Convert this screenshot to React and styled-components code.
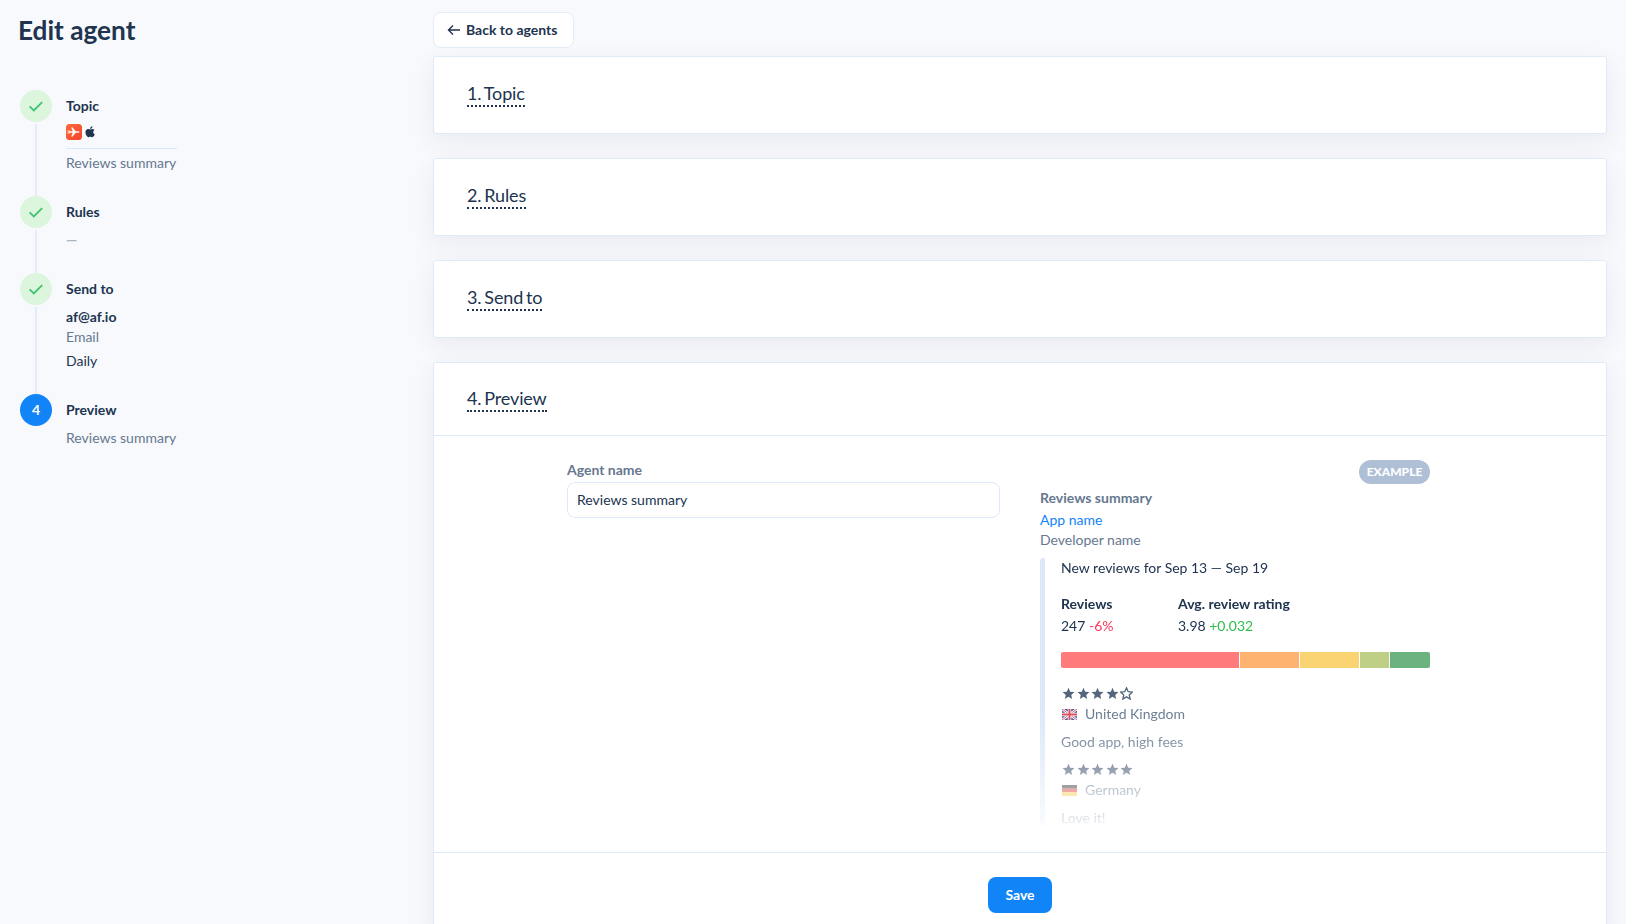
import React from "react";
import styled, { createGlobalStyle } from "styled-components";

const Global = createGlobalStyle`
  html, body { margin: 0; padding: 0; height: 924px; overflow: hidden; background: #f8f9fd; }
  body { font-family: Lato, "Liberation Sans", sans-serif; color: #20344f; -webkit-font-smoothing: antialiased; }
  * { box-sizing: border-box; }
`;

const Page = styled.div`
  display: grid;
  grid-template-columns: 433px 1174px;
  height: 924px;
  overflow: hidden;
`;
const Sidebar = styled.aside`
  padding: 12px 0 0 18px;
`;
const PageTitle = styled.h1`
  margin: 0 0 42px;
  font-size: 26.2px;
  line-height: 36px;
  font-weight: 700;
  color: #20344f;
`;
const Steps = styled.div`
  display: flex;
  flex-direction: column;
  padding-left: 2px;
`;
const Step = styled.div`
  display: grid;
  grid-template-columns: 32px 1fr;
  column-gap: 14px;
  height: ${(p) => p.$h}px;
`;
const Rail = styled.div`
  display: flex;
  flex-direction: column;
  align-items: center;
  gap: 2px;
`;
const Circle = styled.div`
  flex: none;
  width: 32px;
  height: 32px;
  border-radius: 50%;
  display: flex;
  align-items: center;
  justify-content: center;
  background: ${(p) => (p.$active ? "#1184f8" : "#dcf5dd")};
  color: #fff;
  font-size: 14px;
  font-weight: 700;
  padding-bottom: 1px;
`;
const RailLine = styled.div`
  flex: 1;
  width: 2px;
  background: #e3edf9;
`;
const StepBody = styled.div`
  display: flex;
  flex-direction: column;
  align-items: flex-start;
  padding-top: 5.5px;
`;
const StepTitle = styled.div`
  font-size: 14px;
  line-height: 20px;
  font-weight: 700;
  color: #20344f;
  margin-bottom: 8.5px;
`;
const IconRow = styled.div`
  display: flex;
  align-items: center;
  gap: 3px;
  height: 16px;
  width: 111px;
`;
const Rule = styled.div`
  width: 111px;
  height: 1px;
  background: #dbe8f7;
  margin: 8px 0 4px;
`;
const Muted = styled.div`
  font-size: 14px;
  line-height: 20px;
  color: #66788f;
`;
const Strong = styled.div`
  font-size: 14px;
  line-height: 20px;
  font-weight: 700;
  color: #20344f;
`;
const Plain = styled.div`
  font-size: 14px;
  line-height: 20px;
  margin-top: 4px;
  color: #20344f;
`;
const Dash = styled.div`
  font-size: 14px;
  line-height: 20px;
  font-weight: 900;
  color: #a9b4c2;
`;

const Main = styled.main`
  display: flex;
  flex-direction: column;
  align-items: flex-start;
  padding-top: 12px;
`;
const BackButton = styled.button`
  height: 36px;
  width: 141px;
  margin-bottom: 8px;
  padding: 0 0 2px 13px;
  display: flex;
  align-items: center;
  gap: 5px;
  border: 1px solid #e3edf9;
  border-radius: 8px;
  background: #fff;
  color: #20344f;
  font-family: inherit;
  font-size: 14px;
  font-weight: 700;
`;
const ArrowIcon = styled.svg`
  margin-top: 2px;
`;
const Card = styled.section`
  width: 100%;
  flex: none;
  background: #fff;
  border: 1px solid #dfeaf8;
  border-radius: 3px;
  box-shadow: 0 8px 24px rgba(32, 52, 79, 0.07);
  margin-bottom: 24px;
`;
const CardHead = styled.div`
  height: ${(p) => (p.$open ? 73 : 76)}px;
  padding: 0 0 ${(p) => (p.$open ? 0 : 3)}px 33px;
  display: flex;
  align-items: center;
  border-bottom: ${(p) => (p.$open ? "1px solid #dfeaf8" : "none")};
`;
const CardTitle = styled.h2`
  margin: 0;
  font-size: 18px;
  font-weight: 400;
  line-height: 24px;
  color: #20344f;
  border-bottom: 2px dotted #20344f;
  letter-spacing: -0.15px;
  word-spacing: -1.5px;
`;
const CardBody = styled.div`
  height: 417px;
  padding: 24px 176px 0 133px;
  display: grid;
  grid-template-columns: 433px 390px;
  column-gap: 40px;
  border-bottom: 1px solid #dfeaf8;
  overflow: hidden;
`;
const FieldLabel = styled.label`
  display: block;
  font-size: 14px;
  line-height: 20px;
  font-weight: 700;
  color: #66788f;
  margin-bottom: 2px;
`;
const TextInput = styled.input`
  display: block;
  width: 433px;
  height: 36px;
  border: 1px solid #dfeaf8;
  border-radius: 8px;
  padding: 0 9px 1px;
  background: #fff;
  font-family: inherit;
  font-size: 14px;
  color: #20344f;
  outline: none;
`;
const Example = styled.div`
  display: flex;
  flex-direction: column;
  height: 367px;
`;
const BadgeRow = styled.div`
  display: flex;
  justify-content: flex-end;
  height: 24px;
  margin-bottom: 2px;
`;
const Badge = styled.span`
  width: 71px;
  height: 24px;
  border-radius: 12px;
  background: #afc0d6;
  color: #fff;
  font-size: 12px;
  font-weight: 900;
  padding-bottom: 2px;
  display: flex;
  align-items: center;
  justify-content: center;
`;
const ExTitle = styled.div`
  font-size: 14px;
  line-height: 24px;
  font-weight: 700;
  color: #66788f;
`;
const AppLink = styled.a`
  display: block;
  font-size: 14px;
  line-height: 20px;
  color: #1184f8;
`;
const Dev = styled.div`
  font-size: 14px;
  line-height: 20px;
  color: #66788f;
`;
const Quote = styled.div`
  flex: 1;
  margin-top: 8px;
  padding: 0 0 0 16px;
  border-left: 5px solid #dce8f8;
  border-radius: 3px 0 0 0;
  mask-image: linear-gradient(to bottom, #000 55%, rgba(0,0,0,0.8) 68%, rgba(0,0,0,0.6) 79%, rgba(0,0,0,0.4) 87%, rgba(0,0,0,0.2) 97%, transparent 100%);
  -webkit-mask-image: linear-gradient(to bottom, #000 55%, rgba(0,0,0,0.8) 68%, rgba(0,0,0,0.6) 79%, rgba(0,0,0,0.4) 87%, rgba(0,0,0,0.2) 97%, transparent 100%);
`;
const QuoteHead = styled.div`
  font-size: 14px;
  line-height: 20px;
  color: #20344f;
`;
const Stats = styled.div`
  display: flex;
  margin-top: 16px;
`;
const Stat = styled.div`
  width: ${(p) => p.$w}px;
`;
const StatName = styled.div`
  font-size: 14px;
  line-height: 20px;
  font-weight: 700;
  color: #20344f;
`;
const StatValue = styled.div`
  font-size: 14px;
  line-height: 20px;
  margin-top: 2px;
  color: #20344f;
`;
const Delta = styled.span`
  color: ${(p) => p.$c};
`;
const Bars = styled.div`
  display: flex;
  gap: 1px;
  height: 16px;
  width: 369px;
  margin-top: 16px;
  border-radius: 2px;
  overflow: hidden;
`;
const BarSeg = styled.div`
  background: ${(p) => p.$c};
  width: ${(p) => p.$w}px;
`;
const Stars = styled.div`
  display: flex;
  gap: 1.6px;
  height: 14px;
  align-items: center;
  padding-left: 1px;
  margin-top: ${(p) => p.$mt}px;
`;
const Country = styled.div`
  display: flex;
  align-items: center;
  gap: 8px;
  margin-top: 4px;
  padding-left: 1px;
  font-size: 14px;
  line-height: 20px;
  color: #66788f;
`;
const ReviewText = styled.div`
  font-size: 14px;
  line-height: 20px;
  margin-top: 8px;
  color: #66788f;
`;
const CardFoot = styled.div`
  height: 82px;
  display: flex;
  justify-content: center;
  padding-top: 24px;
`;
const SaveButton = styled.button`
  width: 64px;
  height: 36px;
  border: none;
  border-radius: 8px;
  padding: 0 0 2px;
  background: #1184f8;
  color: #fff;
  font-family: inherit;
  font-size: 14px;
  font-weight: 700;
`;

const Check = () => (
  <svg width="16" height="16" viewBox="0 0 16 16" fill="none">
    <path d="M1.6 8.4 L5.8 12.4 L14.2 4.2" stroke="#3fc46f" strokeWidth="1.8" />
  </svg>
);
const Plane = () => (
  <svg width="16" height="16" viewBox="0 0 16 16">
    <defs>
      <linearGradient id="pl" x1="0" y1="0" x2="1" y2="1">
        <stop offset="0" stopColor="#ff6a3a" />
        <stop offset="1" stopColor="#f2452c" />
      </linearGradient>
    </defs>
    <rect width="16" height="16" rx="3.5" fill="url(#pl)" />
    <rect x="1.4" y="6.4" width="3" height="3.2" fill="#ffb7a0" />
    <path d="M3.4 7.2h3.2L5.2 3.4h1.4L9.8 7.2h2.2c1 0 1.6.3 1.6.8s-.6.8-1.6.8H9.8L6.6 12.6H5.2L6.6 8.8H3.4z" fill="#fff" opacity=".95" />
  </svg>
);
const Apple = () => (
  <svg width="10" height="12" viewBox="3.6 2.8 16.4 19" fill="#20344f">
    <path d="M17.05 20.28c-.98.95-2.05.8-3.08.35-1.09-.46-2.09-.48-3.24 0-1.44.62-2.2.44-3.06-.35C2.79 15.25 3.51 7.59 9.05 7.31c1.35.07 2.29.74 3.08.8 1.18-.24 2.31-.93 3.57-.84 1.51.12 2.65.72 3.4 1.8-3.12 1.87-2.38 5.98.48 7.13-.57 1.5-1.31 2.99-2.54 4.09zM12.03 7.25c-.15-2.23 1.66-4.07 3.74-4.25.29 2.58-2.34 4.5-3.74 4.25z" />
  </svg>
);
const Arrow = () => (
  <ArrowIcon width="14" height="12" viewBox="0 0 14 12" fill="none" stroke="#20344f" strokeWidth="1.4">
    <path d="M13 6H1.5M6 1.5 1.5 6 6 10.5" />
  </ArrowIcon>
);
const Star = ({ color, hollow }) => (
  <svg width="13" height="13" viewBox="0 0 24 24">
    <path
      d="M12 1.5l3.1 7.2 7.9.7-6 5.2 1.8 7.7L12 18.2l-6.8 4.1L7 14.6l-6-5.2 7.9-.7z"
      fill={hollow ? "none" : color}
      stroke={color}
      strokeWidth={hollow ? 2.4 : 0}
    />
  </svg>
);
const FlagUK = () => (
  <svg width="15" height="11" viewBox="0 0 30 22">
    <rect width="30" height="22" fill="#3f5a9a" />
    <path d="M0 0 30 22M30 0 0 22" stroke="#fff" strokeWidth="5" />
    <path d="M0 0 30 22M30 0 0 22" stroke="#d9566b" strokeWidth="2" />
    <path d="M15 0v22M0 11h30" stroke="#fff" strokeWidth="7" />
    <path d="M15 0v22M0 11h30" stroke="#d9465b" strokeWidth="4" />
  </svg>
);
const FlagDE = () => (
  <svg width="15" height="11" viewBox="0 0 15 11">
    <rect width="15" height="3.7" fill="#333" />
    <rect y="3.7" width="15" height="3.7" fill="#d8342c" />
    <rect y="7.3" width="15" height="3.7" fill="#f7c52e" />
  </svg>
);

const segs = [
  ["#ff7b7b", 178],
  ["#ffb370", 59],
  ["#fad473", 59],
  ["#bfd086", 29],
  ["#6ab37f", 40],
];

export default function App() {
  return (
    <Page>
      <Global />
      <Sidebar>
        <PageTitle>Edit agent</PageTitle>
        <Steps>
          <Step $h={106}>
            <Rail>
              <Circle><Check /></Circle>
              <RailLine />
            </Rail>
            <StepBody>
              <StepTitle>Topic</StepTitle>
              <IconRow><Plane /><Apple /></IconRow>
              <Rule />
              <Muted>Reviews summary</Muted>
            </StepBody>
          </Step>
          <Step $h={77}>
            <Rail>
              <Circle><Check /></Circle>
              <RailLine />
            </Rail>
            <StepBody>
              <StepTitle>Rules</StepTitle>
              <Dash>—</Dash>
            </StepBody>
          </Step>
          <Step $h={121}>
            <Rail>
              <Circle><Check /></Circle>
              <RailLine />
            </Rail>
            <StepBody>
              <StepTitle>Send to</StepTitle>
              <Strong>af@af.io</Strong>
              <Muted>Email</Muted>
              <Plain>Daily</Plain>
            </StepBody>
          </Step>
          <Step $h={70}>
            <Rail>
              <Circle $active>4</Circle>
            </Rail>
            <StepBody>
              <StepTitle>Preview</StepTitle>
              <Muted>Reviews summary</Muted>
            </StepBody>
          </Step>
        </Steps>
      </Sidebar>
      <Main>
        <BackButton><Arrow />Back to agents</BackButton>
        <Card><CardHead><CardTitle>1. Topic</CardTitle></CardHead></Card>
        <Card><CardHead><CardTitle>2. Rules</CardTitle></CardHead></Card>
        <Card><CardHead><CardTitle>3. Send to</CardTitle></CardHead></Card>
        <Card>
          <CardHead $open><CardTitle>4. Preview</CardTitle></CardHead>
          <CardBody>
            <div>
              <FieldLabel>Agent name</FieldLabel>
              <TextInput defaultValue="Reviews summary" />
            </div>
            <Example>
              <BadgeRow><Badge>EXAMPLE</Badge></BadgeRow>
              <ExTitle>Reviews summary</ExTitle>
              <AppLink>App name</AppLink>
              <Dev>Developer name</Dev>
              <Quote>
                <QuoteHead>New reviews for Sep 13 — Sep 19</QuoteHead>
                <Stats>
                  <Stat $w={117}>
                    <StatName>Reviews</StatName>
                    <StatValue>247 <Delta $c="#f5365c">-6%</Delta></StatValue>
                  </Stat>
                  <Stat $w={200}>
                    <StatName>Avg. review rating</StatName>
                    <StatValue>3.98 <Delta $c="#2dbe4f">+0.032</Delta></StatValue>
                  </Stat>
                </Stats>
                <Bars>
                  {segs.map(([c, w]) => <BarSeg key={c} $c={c} $w={w} />)}
                </Bars>
                <Stars $mt={18}>
                  {[0, 1, 2, 3].map((i) => <Star key={i} color="#53657d" />)}
                  <Star color="#53657d" hollow />
                </Stars>
                <Country><FlagUK />United Kingdom</Country>
                <ReviewText>Good app, high fees</ReviewText>
                <Stars $mt={10}>
                  {[0, 1, 2, 3, 4].map((i) => <Star key={i} color="#53657d" />)}
                </Stars>
                <Country><FlagDE />Germany</Country>
                <ReviewText>Love it!</ReviewText>
              </Quote>
            </Example>
          </CardBody>
          <CardFoot><SaveButton>Save</SaveButton></CardFoot>
        </Card>
      </Main>
    </Page>
  );
}
